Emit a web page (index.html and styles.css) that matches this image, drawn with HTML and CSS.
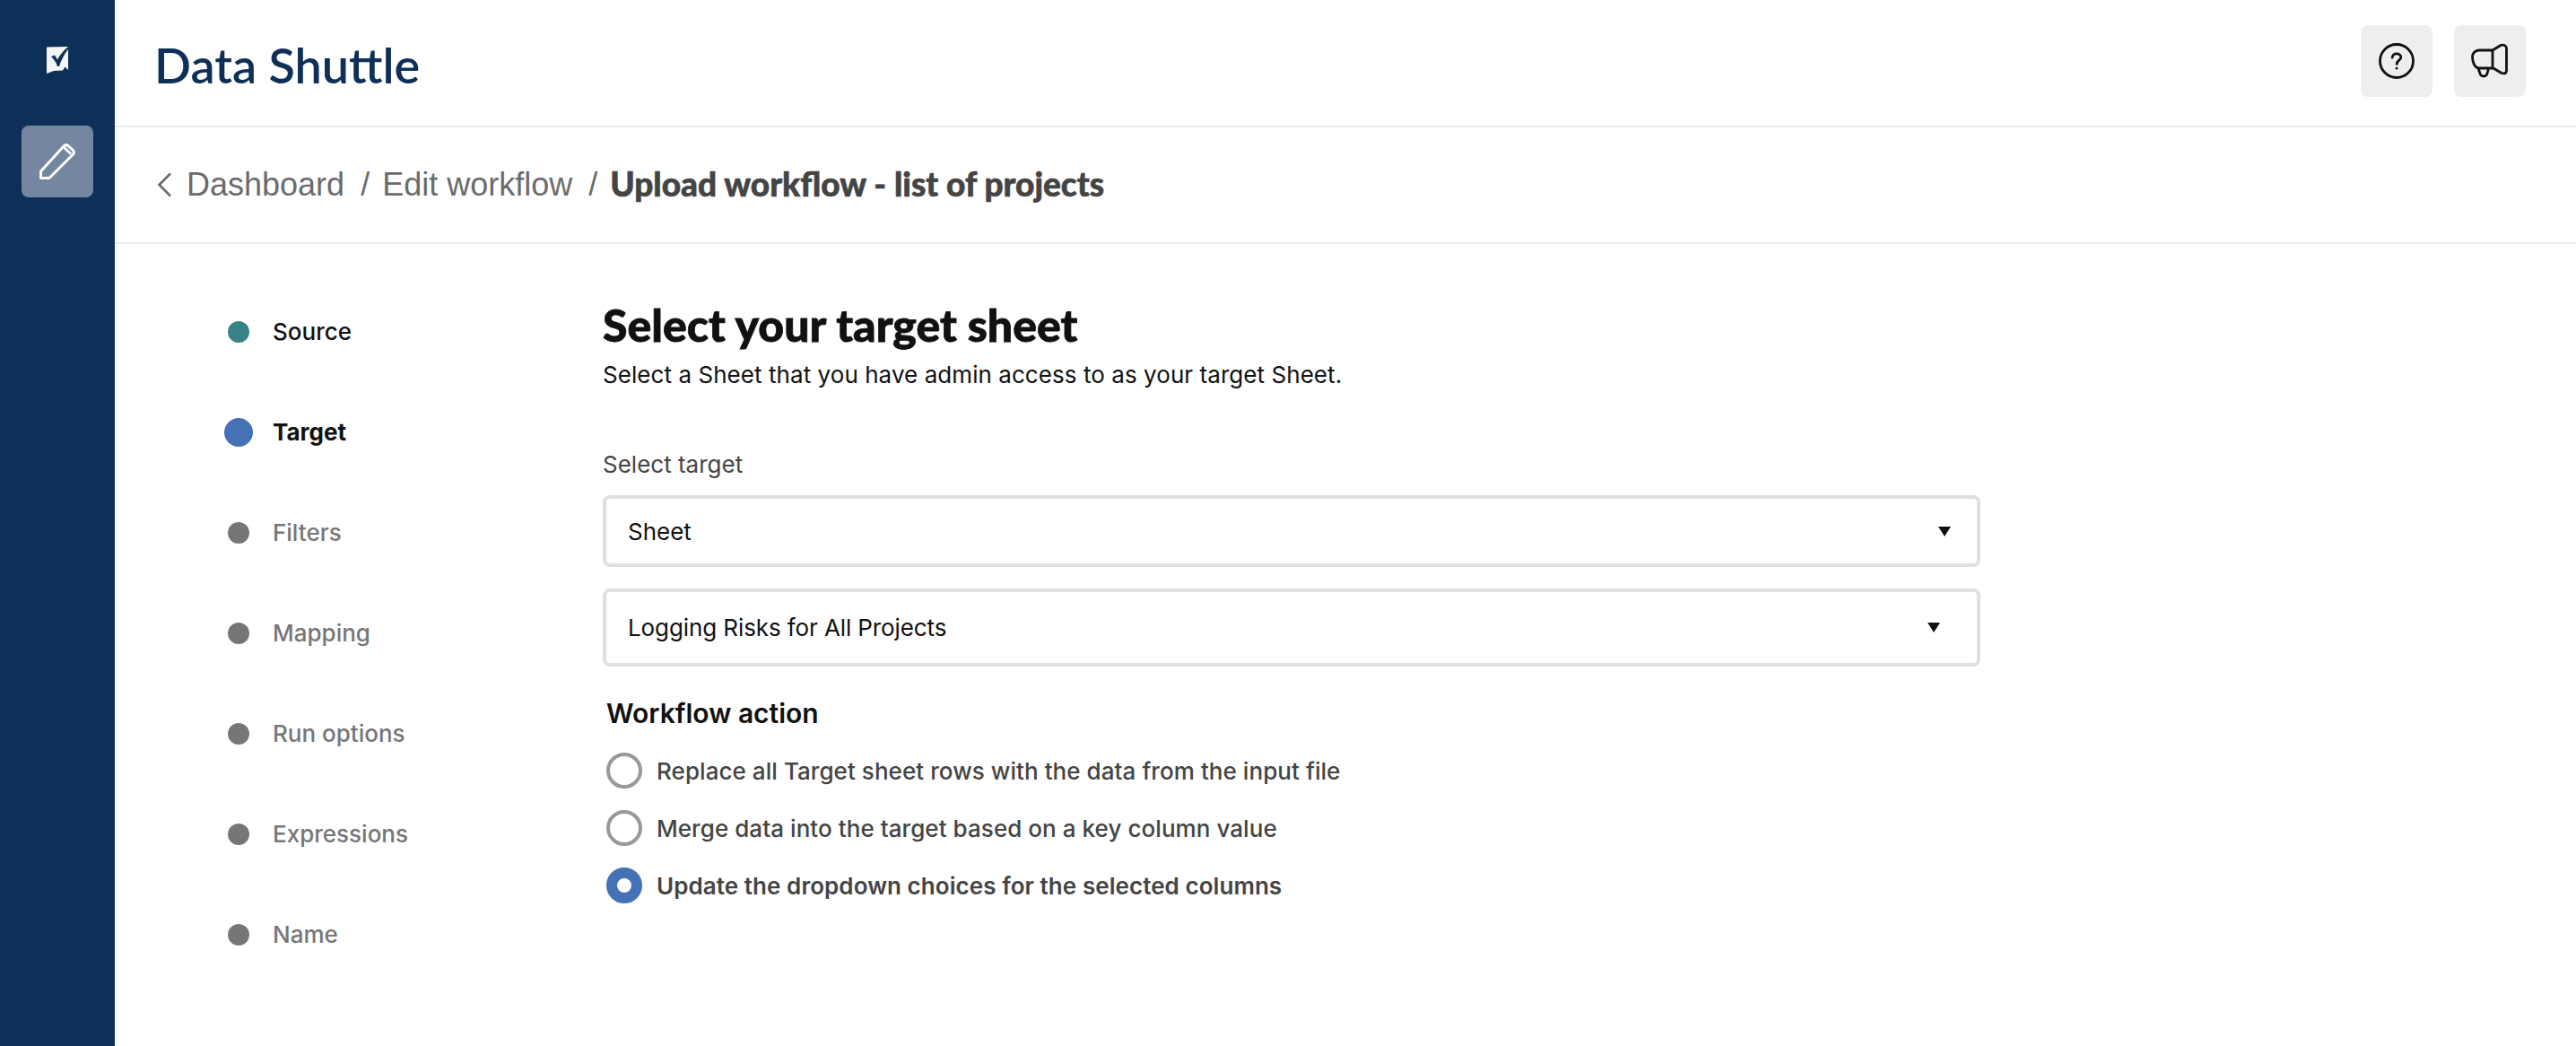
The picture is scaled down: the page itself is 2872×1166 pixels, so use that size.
FILE: index.html
```html
<!DOCTYPE html>
<html lang="en">
<head>
<meta charset="utf-8">
<title>Data Shuttle</title>
<link rel="stylesheet" href="styles.css">
</head>
<body>
<div class="app">
  <nav class="rail">
    <svg class="logo" width="24" height="30" viewBox="0 0 24 30"><path d="M0 0.500L24 0V26L20.500 22.500L18 26.500L8 27L0 30Z" fill="#f4f5f6"/><path d="M5 11L9 9.500L12 14.500C15 9 19 4 24 0V3C20 8 16 15 14 22H12C10.500 17 8 14 5 11Z" fill="#0e2f57"/></svg>
    <div class="rail-btn">
      <svg width="40" height="40" viewBox="0 0 40 40" fill="none" stroke="#fff" stroke-width="3" stroke-linejoin="round"><path d="M1.500 38.500V31L27 3Q29.500 .5 32 2.500L37 7Q39.500 9.500 37.500 12L11 38.500Z"/><path d="M27.500 4.500L35 11.500"/></svg>
    </div>
  </nav>
  <div class="main">
    <header class="top">
      <h1 class="title">Data Shuttle</h1>
      <div class="top-actions">
        <div class="icon-btn">
          <svg width="40" height="40" viewBox="0 0 40 40" fill="none" stroke="#111" stroke-width="2.800" stroke-linecap="round"><circle cx="20" cy="20" r="18.500"/><path d="M15.200 16.200C15.200 13.400 17.400 11.800 20 11.800C22.700 11.800 24.800 13.500 24.800 15.900C24.800 19 20.200 19.400 20.200 23.400"/><circle cx="20" cy="28.200" r="1" fill="#111" stroke-width="1"/></svg>
        </div>
        <div class="icon-btn">
          <svg width="42" height="40" viewBox="0 0 42 40" fill="none" stroke="#111" stroke-width="2.800" stroke-linejoin="round"><path d="M24 8H9C4.500 8 1.500 11.500 1.500 15C1.500 20 3.500 28 9 28H24Z"/><path d="M24 8L33 2.500Q39 1 39.500 6V31Q39 35 34 33.500L24 27.500"/><path d="M8 28L10 34C11 38 17 38 18 34L19.500 28"/></svg>
        </div>
      </div>
    </header>
    <div class="crumbs">
      <svg class="chev" width="16" height="28" viewBox="0 0 16 28" fill="none" stroke="#6b6b6b" stroke-width="2.600"><path d="M15 1.500L2.500 14L15 26.500"/></svg>
      <span class="crumb">Dashboard</span><span class="sep">/</span><span class="crumb">Edit workflow</span><span class="sep">/</span><span class="crumb-current">Upload workflow - list of projects</span>
    </div>
    <div class="body">
      <ul class="steps">
        <li class="step done"><span class="dot-wrap"><span class="dot"></span></span>Source</li>
        <li class="step current"><span class="dot-wrap"><span class="dot"></span></span>Target</li>
        <li class="step"><span class="dot-wrap"><span class="dot"></span></span>Filters</li>
        <li class="step"><span class="dot-wrap"><span class="dot"></span></span>Mapping</li>
        <li class="step"><span class="dot-wrap"><span class="dot"></span></span>Run options</li>
        <li class="step"><span class="dot-wrap"><span class="dot"></span></span>Expressions</li>
        <li class="step"><span class="dot-wrap"><span class="dot"></span></span>Name</li>
      </ul>
      <section class="form">
        <h2 class="heading">Select your target sheet</h2>
        <p class="sub">Select a Sheet that you have admin access to as your target Sheet.</p>
        <div class="label">Select target</div>
        <div class="select select-a"><span>Sheet</span><i class="arrow"></i></div>
        <div class="select select-b"><span>Logging Risks for All Projects</span><i class="arrow"></i></div>
        <div class="group-title">Workflow action</div>
        <div class="radio"><i class="ring"></i>Replace all Target sheet rows with the data from the input file</div>
        <div class="radio"><i class="ring"></i>Merge data into the target based on a key column value</div>
        <div class="radio selected"><i class="ring"></i>Update the dropdown choices for the selected columns</div>
      </section>
    </div>
  </div>
</div>
</body>
</html>
```

FILE: styles.css
```css
* { box-sizing: border-box; }
html, body { margin: 0; height: 100%; background: #fff; overflow: hidden; }
body { font-family: Inter, "Liberation Sans", sans-serif; }
.app { display: flex; height: 1166px; }

.rail { width: 128px; flex: none; background: #0e2f57; display: flex; flex-direction: column; align-items: center; }
.logo { display: block; margin-top: 52px; margin-bottom: 58px; }
.rail-btn { width: 80px; height: 80px; border-radius: 8px; background: #7586a0; display: flex; align-items: center; justify-content: center; }

.main { flex: 1; min-width: 0; display: flex; flex-direction: column; }
.top { height: 142px; border-bottom: 2px solid #ebebeb; display: flex; align-items: center; justify-content: space-between; padding: 0 56px 0 44px; }
.title { margin: 4px 0 0; font-family: Lato, sans-serif; font-weight: 600; font-size: 54px; color: #0e2f57; }
.top-actions { display: flex; gap: 24px; margin-top: -4px; }
.icon-btn { width: 80px; height: 80px; border-radius: 8px; background: #eeeeee; display: flex; align-items: center; justify-content: center; }

.crumbs { height: 130px; border-bottom: 2px solid #ebebeb; display: flex; align-items: center; padding: 0 0 0 47px; font-family: "Liberation Sans", sans-serif; font-size: 36px; color: #6b6b6b; }
.chev { margin-right: 17px; }
.sep { margin: 0 14px 0 18px; }
.crumb-current { font-family: Lato, sans-serif; font-weight: 900; color: #444; font-size: 37px; margin-bottom: 3px; -webkit-text-stroke: 0.6px #444; }

.body { display: flex; flex: 1; padding-left: 122px; }
.steps { list-style: none; margin: 41px 0 0; padding: 0; width: 422px; flex: none; }
.step { height: 112px; display: flex; align-items: center; gap: 22px; font-size: 26px; font-weight: 500; color: #767676; }
.dot-wrap { width: 32px; margin-top: 2px; display: flex; justify-content: center; }
.dot { width: 24px; height: 24px; border-radius: 50%; background: #767676; }
.step.done { color: #111; }
.step.done .dot { background: #378188; }
.step.current { color: #111; font-weight: 700; }
.step.current .dot { width: 32px; height: 32px; background: #4472b4; }

.form { width: 1536px; flex: none; padding-top: 62px; }
.heading { margin: 0; font-family: Lato, sans-serif; font-weight: 900; font-size: 50px; line-height: 56px; color: #111; -webkit-text-stroke: 0.8px #111; }
.sub { margin: 12px 0 0; font-size: 26px; line-height: 32px; letter-spacing: 0.06px; color: #111; }
.label { margin-top: 68px; font-size: 26px; line-height: 32px; color: #444; }
.select { display: flex; align-items: center; justify-content: space-between; border: 4px solid #e0e0e0; border-radius: 8px; font-size: 26px; color: #111; padding-left: 24px; }
.select-a { height: 80px; margin-top: 18px; padding-right: 29px; }
.select-b { height: 87px; margin-top: 24px; padding-right: 41px; letter-spacing: -0.1px; }
.arrow { width: 0; height: 0; border-left: 7px solid transparent; border-right: 7px solid transparent; border-top: 11px solid #111; }
.group-title { margin: 34px 0 0 4px; font-size: 30px; line-height: 36px; font-weight: 600; color: #111; }
.radio { height: 64px; margin-left: 4px; display: flex; align-items: center; gap: 16px; font-size: 26px; font-weight: 500; letter-spacing: 0.06px; color: #444; }
.group-title + .radio { margin-top: 14px; }
.ring { width: 40px; height: 40px; flex: none; border-radius: 50%; border: 4px solid #999; background: #fff; }
.radio.selected { font-weight: 600; }
.radio.selected .ring { border: 12px solid #4472b4; }
```
